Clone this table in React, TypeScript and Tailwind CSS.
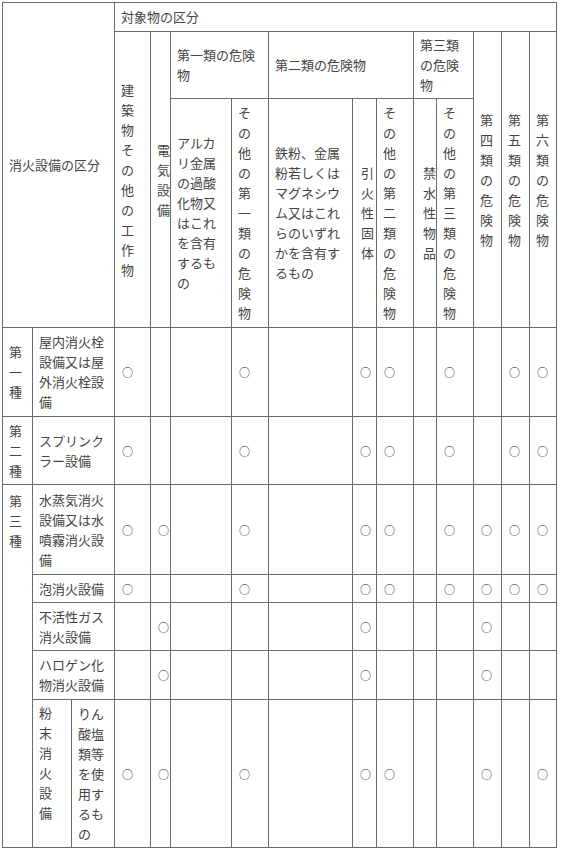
import { ReactNode } from "react";

const FONT = "font-['Noto_Sans_CJK_JP','Noto_Sans',sans-serif]";

// column widths, measured border to border
const cols = [30, 39, 43, 36, 20, 61, 37, 84, 24, 37, 23, 37, 28, 28, 27];

interface CellProps {
  lines?: string[];
  children?: ReactNode;
  rowSpan?: number;
  colSpan?: number;
  className?: string;
}

function Cell({ lines, children, rowSpan, colSpan, className = "" }: CellProps) {
  return (
    <td
      rowSpan={rowSpan}
      colSpan={colSpan}
      className={`border border-[#6b6b6b] py-[3px] pl-[6px] pr-[2px] align-middle whitespace-nowrap leading-[20px] ${className}`}
    >
      {lines
        ? lines.map((l, i) => (
            <span key={i}>
              {i > 0 && <br />}
              {l}
            </span>
          ))
        : children}
    </td>
  );
}

// 縦書き風：1文字ずつ改行
const v = (s: string) => s.split("");

function Marks({ marks }: { marks: string }) {
  return (
    <>
      {marks.split("").map((m, i) => (
        <Cell key={i} className="pl-[7px]">
          {m === "o" && <span className="text-[11px] text-[#222]">○</span>}
        </Cell>
      ))}
    </>
  );
}

export default function App() {
  return (
    <div className={`bg-white min-h-[855px] pt-[2px] pl-[2px] text-[13px] text-[#444] ${FONT}`}>
      <table className="table-fixed border-collapse w-[555px]">
        <colgroup>
          {cols.map((w, i) => (
            <col key={i} style={{ width: w }} />
          ))}
        </colgroup>
        <tbody>
          {/* ヘッダー */}
          <tr className="h-[29px]">
            <Cell rowSpan={3} colSpan={3} lines={["消火設備の区分"]} />
            <Cell colSpan={12} lines={["対象物の区分"]} />
          </tr>
          <tr className="h-[67px]">
            <Cell rowSpan={2} lines={v("建築物その他の工作物")} />
            <Cell rowSpan={2} lines={v("電気設備")} />
            <Cell colSpan={2} lines={["第一類の危険", "物"]} />
            <Cell colSpan={3} lines={["第二類の危険物"]} />
            <Cell colSpan={2} lines={["第三類", "の危険", "物"]} />
            <Cell rowSpan={2} lines={v("第四類の危険物")} />
            <Cell rowSpan={2} lines={v("第五類の危険物")} />
            <Cell rowSpan={2} lines={v("第六類の危険物")} />
          </tr>
          <tr className="h-[229px]">
            <Cell lines={["アルカ", "リ金属", "の過酸", "化物又", "はこれ", "を含有", "するも", "の"]} />
            <Cell lines={v("その他の第一類の危険物")} />
            <Cell lines={["鉄粉、金属", "粉若しくは", "マグネシウ", "ム又はこれ", "らのいずれ", "かを含有す", "るもの"]} />
            <Cell lines={v("引火性固体")} className="pl-[8px]" />
            <Cell lines={v("その他の第二類の危険物")} />
            <Cell lines={v("禁水性物品")} className="pl-[9px]" />
            <Cell lines={v("その他の第三類の危険物")} />
          </tr>

          {/* 第一種 */}
          <tr className="h-[89px]">
            <Cell lines={v("第一種")} />
            <Cell colSpan={2} lines={["屋内消火栓", "設備又は屋", "外消火栓設", "備"]} />
            <Marks marks="o--o-oo-o-oo" />
          </tr>

          {/* 第二種 */}
          <tr className="h-[68px]">
            <Cell lines={v("第二種")} />
            <Cell colSpan={2} lines={["スプリンク", "ラー設備"]} />
            <Marks marks="o--o-oo-o-oo" />
          </tr>

          {/* 第三種 */}
          <tr className="h-[90px]">
            <Cell rowSpan={5} lines={v("第三種")} className="!align-top pt-[6px]" />
            <Cell colSpan={2} lines={["水蒸気消火", "設備又は水", "噴霧消火設", "備"]} />
            <Marks marks="oo-o-oo-oooo" />
          </tr>
          <tr className="h-[28px]">
            <Cell colSpan={2} lines={["泡消火設備"]} />
            <Marks marks="o--o-oo-oooo" />
          </tr>
          <tr className="h-[48px]">
            <Cell colSpan={2} lines={["不活性ガス", "消火設備"]} />
            <Marks marks="-o---o---o--" />
          </tr>
          <tr className="h-[49px]">
            <Cell colSpan={2} lines={["ハロゲン化", "物消火設備"]} />
            <Marks marks="-o---o---o--" />
          </tr>
          <tr className="h-[148px]">
            <Cell lines={v("粉末消火設備")} className="!align-top" />
            <Cell lines={["りん", "酸塩", "類等", "を使", "用す", "るも", "の"]} className="pl-[5px]" />
            <Marks marks="oo-o-oo--o-o" />
          </tr>
        </tbody>
      </table>
    </div>
  );
}
